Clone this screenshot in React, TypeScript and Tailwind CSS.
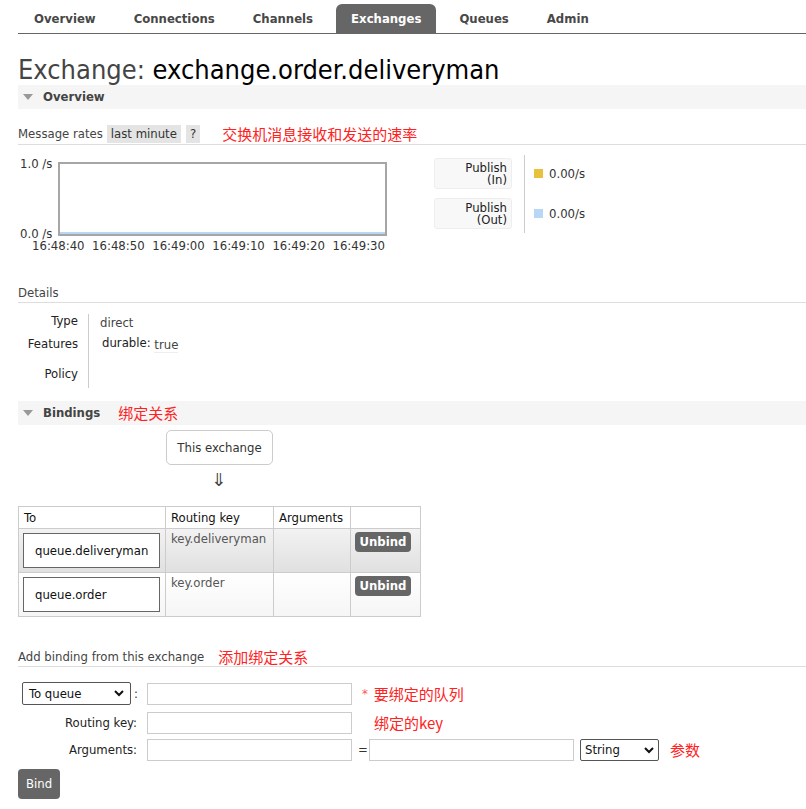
import React from "react";

const F = { fontFamily: '"DejaVu Sans Condensed", "DejaVu Sans", "Noto Sans CJK SC", sans-serif' };
const CJK = { fontFamily: '"Noto Sans CJK SC", sans-serif' };

function Tri() {
  return (
    <svg width="10" height="7" viewBox="0 0 10 7" className="mr-[10px]">
      <polygon points="0,0 10,0 5,6" fill="#999" />
    </svg>
  );
}

function SectionHeader({ title, note }: { title: string; note?: string }) {
  return (
    <div className="flex items-center h-[24px] bg-[#f5f5f5] pl-[5px]">
      <Tri />
      <span className="text-[13px] font-bold text-[#444]">{title}</span>
      {note && (
        <span className="ml-[18px] text-[15px] text-[#f22]" style={CJK}>
          {note}
        </span>
      )}
    </div>
  );
}

function Chevron() {
  return (
    <svg width="10" height="7" viewBox="0 0 10 7">
      <polyline points="1,1 5,5 9,1" fill="none" stroke="#111" strokeWidth="2" />
    </svg>
  );
}

export default function App() {
  const tabs = ["Overview", "Connections", "Channels", "Exchanges", "Queues", "Admin"];
  const times = ["16:48:40", "16:48:50", "16:49:00", "16:49:10", "16:49:20", "16:49:30"];
  return (
    <div className="w-[806px] h-[809px] bg-white text-[#333] text-[13px] leading-[16px] pl-[18px] overflow-hidden" style={F}>
      {/* nav */}
      <div className="flex items-end h-[34px] border-b border-[#666] pt-[4px]">
        <div className="flex gap-[8px] pl-[1px]">
          {tabs.map((t) => (
            <div
              key={t}
              className={
                "h-[29px] px-[15px] flex items-center text-[13px] font-bold rounded-t-[6px] " +
                (t === "Exchanges" ? "bg-[#666] text-white" : "text-[#484848]")
              }
            >
              {t}
            </div>
          ))}
        </div>
      </div>

      {/* title */}
      <h1 className="mt-[21px] text-[27px] leading-[30px] text-[#444] font-normal">
        Exchange: <span className="text-black">exchange.order.deliveryman</span>
      </h1>

      <SectionHeader title="Overview" />

      {/* message rates */}
      <div className="mt-[16px] flex items-center h-[18px] border-b border-[#ddd] box-content pb-[1px]">
        <span className="text-[#444]">Message rates</span>
        <span className="ml-[4px] bg-[#e4e4e4] px-[4px] h-[18px] flex items-center">last minute</span>
        <span className="ml-[5px] bg-[#e4e4e4] px-[4px] h-[18px] flex items-center">?</span>
        <span className="ml-[22px] text-[15px] text-[#f22]" style={CJK}>
          交换机消息接收和发送的速率
        </span>
      </div>

      {/* chart */}
      <div className="flex mt-[7px]">
        <div className="relative w-[400px] h-[100px]">
          <span className="absolute left-[2px] top-[4px] text-[#333]">1.0 /s</span>
          <span className="absolute left-[2px] top-[74px] text-[#333]">0.0 /s</span>
          <div className="absolute left-[40px] top-[10px] w-[329px] h-[74px] border-2 border-[#a6a6a6] flex flex-col justify-end">
            <div className="h-[2px] bg-[#b8d6f5]" />
          </div>
          <div className="absolute left-[14px] top-[86px] w-[353px] flex justify-between text-[#333]">
            {times.map((t) => (
              <span key={t}>{t}</span>
            ))}
          </div>
        </div>
        <div className="ml-[16px] mt-[6px] flex flex-col gap-[9px]">
          {["In", "Out"].map((x) => (
            <div key={x} className="w-[78px] h-[31px] bg-[#f8f8f8] border border-[#eee] rounded-[3px] flex flex-col items-end justify-center pr-[4px] leading-[12px] text-[#222]">
              <span>Publish</span>
              <span>({x})</span>
            </div>
          ))}
        </div>
        <div className="ml-[12px] mt-[3px] h-[78px] border-l border-[#ccc]" />
        <div className="ml-[9px] mt-[6px] flex flex-col gap-[9px]">
          {[
            ["#e8c23a", "In"],
            ["#b8d6f5", "Out"],
          ].map(([c]) => (
            <div key={c} className="h-[31px] flex items-center">
              <span className="w-[9px] h-[9px] mr-[6px]" style={{ background: c }} />
              <span className="text-[#333]">0.00/s</span>
            </div>
          ))}
        </div>
      </div>

      {/* details */}
      <div className="mt-[33px] pb-[1px] border-b border-[#ddd] text-[#444]">Details</div>
      <div className="flex mt-[11px]">
        <div className="w-[71px] border-r border-[#ccc] pr-[10px] flex flex-col items-end text-[#222] h-[74px]">
          <span className="h-[23px] leading-[14px]">Type</span>
          <span className="h-[30px] leading-[14px]">Features</span>
          <span className="leading-[14px]">Policy</span>
        </div>
        <div className="pl-[11px] flex flex-col">
          <span className="h-[22px] leading-[16px] text-[#444] pt-[1px]">direct</span>
          <span className="leading-[14px] pl-[2px] text-[#222]">
            durable: <span className="text-[#444] border-b border-[#eee] relative top-[2px]">true</span>
          </span>
        </div>
      </div>

      <div className="mt-[13px]">
        <SectionHeader title="Bindings" note="绑定关系" />
      </div>

      {/* this exchange */}
      <div className="ml-[148px] mt-[5px] w-[107px] h-[35px] border border-[#ccc] rounded-[5px] flex items-center justify-center text-[#333]">
        This exchange
      </div>
      <div className="ml-[193px] mt-[1px] text-[18px] leading-[28px] text-[#444]" style={{ fontFamily: '"DejaVu Sans", sans-serif' }}>
        ⇓
      </div>

      {/* table */}
      <table className="mt-[12px] border-collapse">
        <thead>
          <tr className="h-[22px]">
            <th className="w-[147px] border border-[#ccc] text-left font-normal px-[5px] text-[#111]">To</th>
            <th className="w-[108px] border border-[#ccc] text-left font-normal px-[5px] text-[#111]">Routing key</th>
            <th className="w-[77px] border border-[#ccc] text-left font-normal px-[5px] text-[#111]">Arguments</th>
            <th className="w-[70px] border border-[#ccc]"></th>
          </tr>
        </thead>
        <tbody>
          {[
            ["queue.deliveryman", "key.deliveryman", "bg-[linear-gradient(#f2f2f2,#e0e0e0)]"],
            ["queue.order", "key.order", "bg-[linear-gradient(#ffffff,#f5f5f5)]"],
          ].map(([q, k, bg]) => (
            <tr key={q} className={"h-[44px] " + bg}>
              <td className="border border-[#ccc] px-[4px]">
                <div className="w-[137px] h-[35px] border border-[#666] bg-white flex items-center pl-[11px] text-[#111]">{q}</div>
              </td>
              <td className="border border-[#ccc] align-top px-[5px] pt-[2px] text-[#555]">{k}</td>
              <td className="border border-[#ccc]"></td>
              <td className="border border-[#ccc] align-top pt-[3px] px-[4px]">
                <div className="w-[56px] h-[20px] bg-[#666] rounded-[4px] text-white font-bold flex items-center justify-center">Unbind</div>
              </td>
            </tr>
          ))}
        </tbody>
      </table>

      {/* add binding */}
      <div className="mt-[31px] flex items-center border-b border-[#ddd] h-[17px] box-content pb-[1px]">
        <span className="text-[#444]">Add binding from this exchange</span>
        <span className="ml-[14px] text-[15px] text-[#f22]" style={CJK}>添加绑定关系</span>
      </div>

      <div className="mt-[15px] flex flex-col pl-[4px]">
        <div className="flex items-center h-[23px]">
          <div className="w-[109px] h-[23px] border border-[#555] rounded-[2px] flex items-center justify-between px-[6px] text-[#111]">
            <span>To queue</span>
            <Chevron />
          </div>
          <span className="ml-[3px] w-[13px]">:</span>
          <div className="w-[205px] h-[22px] border border-[#ccc]" />
          <span className="ml-[10px] text-[#f55]">*</span>
          <span className="ml-[6px] text-[15px] text-[#f22]" style={CJK}>要绑定的队列</span>
        </div>
        <div className="flex items-center h-[22px] mt-[7px]">
          <span className="w-[115px] text-right text-[#222]">Routing key:</span>
          <div className="ml-[10px] w-[205px] h-[22px] border border-[#ccc]" />
          <span className="ml-[22px] text-[15px] text-[#f22]" style={CJK}>绑定的key</span>
        </div>
        <div className="flex items-center h-[22px] mt-[5px]">
          <span className="w-[115px] text-right text-[#222]">Arguments:</span>
          <div className="ml-[10px] w-[205px] h-[22px] border border-[#ccc]" />
          <span className="ml-[6px] w-[11px]">=</span>
          <div className="w-[205px] h-[22px] border border-[#ccc]" />
          <div className="ml-[6px] w-[79px] h-[22px] border border-[#555] rounded-[2px] flex items-center justify-between px-[4px] text-[#111]">
            <span>String</span>
            <Chevron />
          </div>
          <span className="ml-[11px] text-[15px] text-[#f22]" style={CJK}>参数</span>
        </div>
      </div>
      <div className="mt-[8px] w-[42px] h-[30px] bg-[#666] rounded-[4px] text-white flex items-center justify-center">Bind</div>
    </div>
  );
}
